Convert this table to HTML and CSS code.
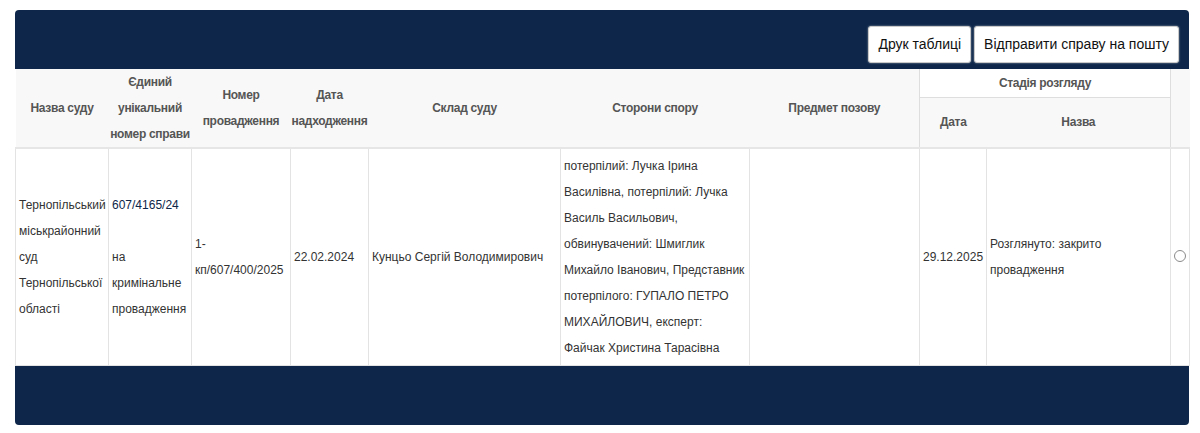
FILE: index.html
```html
<!DOCTYPE html>
<html lang="uk">
<head>
<meta charset="utf-8">
<title>Справи</title>
<link rel="stylesheet" href="styles.css">
</head>
<body>
<div class="panel">
  <div class="panel-top">
    <button class="btn">Друк таблиці</button>
    <button class="btn">Відправити справу на пошту</button>
  </div>
  <table class="cases">
    <colgroup>
      <col class="c1"><col class="c2"><col class="c3"><col class="c4"><col class="c5">
      <col class="c6"><col class="c7"><col class="c8"><col class="c9"><col class="c10">
    </colgroup>
    <thead>
      <tr class="hr1">
        <th rowspan="2" class="hb">Назва суду</th>
        <th rowspan="2" class="hb">Єдиний унікальний номер справи</th>
        <th rowspan="2" class="hb">Номер провадження</th>
        <th rowspan="2" class="hb">Дата надходження</th>
        <th rowspan="2" class="hb">Склад суду</th>
        <th rowspan="2" class="hb">Сторони спору</th>
        <th rowspan="2" class="hb">Предмет позову</th>
        <th colspan="2" class="stage">Стадія розгляду</th>
        <th rowspan="2" class="hb"></th>
      </tr>
      <tr class="hr2">
        <th class="hb sub-l">Дата</th>
        <th class="hb sub-r">Назва</th>
      </tr>
    </thead>
    <tbody>
      <tr class="row">
        <td>Тернопільський міськрайонний суд Тернопільської області</td>
        <td><a class="case-link" href="#">607/4165/24</a><br><br>на кримінальне провадження</td>
        <td>1-кп/607/400/2025</td>
        <td>22.02.2024</td>
        <td>Кунцьо Сергій Володимирович</td>
        <td>потерпілий: Лучка Ірина Василівна, потерпілий: Лучка Василь Васильович, обвинувачений: Шмиглик Михайло Іванович, Представник потерпілого: ГУПАЛО ПЕТРО МИХАЙЛОВИЧ, експерт: Файчак Христина Тарасівна</td>
        <td></td>
        <td>29.12.2025</td>
        <td>Розглянуто: закрито провадження</td>
        <td class="sel"><span class="radio"></span></td>
      </tr>
    </tbody>
  </table>
  <div class="panel-bottom"></div>
</div>
</body>
</html>
```

FILE: styles.css
```css
html, body {
  margin: 0;
  padding: 0;
  background: #ffffff;
}

body {
  font-family: "Liberation Sans", Arial, Helvetica, sans-serif;
  color: #333;
}

.panel {
  width: 1174px;
  margin: 10px 0 0 15px;
}

.panel-top {
  height: 59px;
  box-sizing: border-box;
  background: #0d2649;
  border-radius: 4px 4px 0 0;
  display: flex;
  justify-content: flex-end;
  align-items: flex-end;
  gap: 3px;
  padding: 0 10px 6px 0;
}

.btn {
  font-family: "Liberation Sans", Arial, Helvetica, sans-serif;
  font-size: 14px;
  line-height: 17px;
  color: #111;
  background: #fff;
  border: 1px solid #c9c9c9;
  border-radius: 3px;
  box-shadow: 0 0 2px rgba(255, 255, 255, 0.6);
  padding: 9px 9px;
  height: 37px;
  cursor: pointer;
}

.cases {
  width: 1174px;
  table-layout: fixed;
  border-collapse: collapse;
  font-size: 12px;
}

.c1 { width: 93px; }
.c2 { width: 83px; }
.c3 { width: 99px; }
.c4 { width: 78px; }
.c5 { width: 192px; }
.c6 { width: 189px; }
.c7 { width: 170px; }
.c8 { width: 67px; }
.c9 { width: 184px; }
.c10 { width: 19px; }

.cases th {
  background: #f8f8f8;
  color: #555;
  font-weight: bold;
  font-size: 12px;
  letter-spacing: -0.3px;
  line-height: 26px;
  padding: 0 1px;
  text-align: center;
  vertical-align: middle;
}

.hr1 { height: 28px; }
.hr2 { height: 51px; }

.cases th.hb {
  border-bottom: 2px solid #e6e6e6;
}

.cases th.stage {
  background: #fff;
  border: 1px solid #dedede;
  border-top: none;
}

.cases th.sub-l { border-left: 1px solid #dedede; }
.cases th.sub-r { border-right: 1px solid #dedede; }

.cases td {
  border: 1px solid #e3e3e3;
  padding: 4px 3px;
  line-height: 26px;
  vertical-align: middle;
  color: #333;
}

.row { height: 216px; }

.case-link {
  color: #0d2649;
  text-decoration: none;
}

.sel {
  text-align: center;
}

.radio {
  display: inline-block;
  width: 10px;
  height: 10px;
  border: 1px solid #8a8a8a;
  border-radius: 50%;
  vertical-align: middle;
  background: #fff;
  margin-bottom: 3px;
}

.panel-bottom {
  height: 59px;
  background: #0d2649;
  border-radius: 0 0 4px 4px;
}
```
